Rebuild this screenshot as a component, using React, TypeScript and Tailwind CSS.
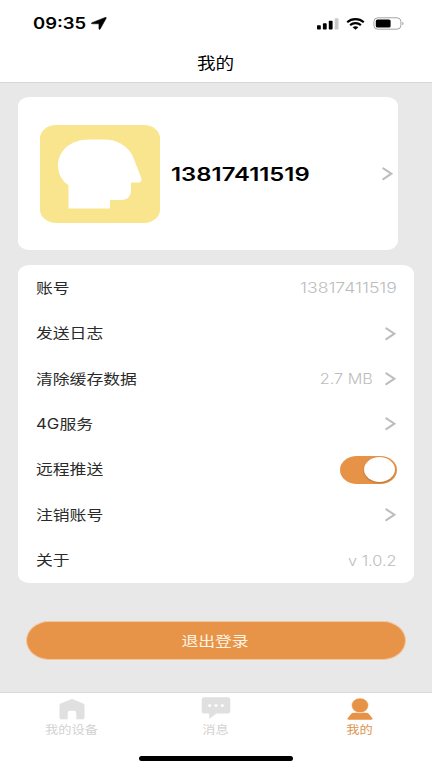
import React, { useState } from "react";

const cjk = "font-['Inter','Noto_Sans_CJK_SC',sans-serif]";

function Chevron({ className = "" }: { className?: string }) {
  return (
    <svg width="12" height="14" viewBox="0 0 12 14" fill="none" className={`shrink-0 ${className}`}>
      <path d="M1.3 1.3 9.4 6.7 1.3 12.1" stroke="#bdbdbd" strokeWidth="2" strokeLinecap="round" strokeLinejoin="miter" />
    </svg>
  );
}

function StatusBar() {
  return (
    <div className="flex h-[47px] items-center justify-between pr-[27px] pl-[33px]">
      <div className="flex items-center">
        <span className="w-[57px] origin-left scale-x-[1.19] pt-px text-[15.5px] leading-none font-semibold">09:35</span>
        <svg width="16" height="13" viewBox="0 0 16 13" className="ml-px">
          <path d="M14.2.4C15 .1 15.6.6 15.2 1.2L9.2 12.1c-.4.7-1.3.5-1.3-.3V7.2c0-.3-.1-.4-.5-.4H1.3C.3 6.8.1 6 .9 5.7Z" fill="#000" stroke="#000" strokeWidth=".5" />
        </svg>
      </div>
      <div className="flex items-center">
        <svg width="22" height="12" viewBox="0 0 22 12">
          <rect x="0" y="7.3" width="3.8" height="4.2" rx=".8" />
          <rect x="5.9" y="5.3" width="3.8" height="6.2" rx=".8" />
          <rect x="11.8" y="2.8" width="3.8" height="8.7" rx=".8" />
          <rect x="17.7" y=".3" width="3.8" height="11.2" rx=".8" fill="#c9c9c9" />
        </svg>
        <svg width="19" height="12" viewBox="0 0 19 12" className="ml-[7px]">
          <path d="M1.2 4.2C5.7.1 13.3.1 17.8 4.2M4.1 7.1c3-2.6 7.8-2.6 10.8 0" fill="none" stroke="#000" strokeWidth="2.1" />
          <path d="M6.6 9.3c1.7-1.4 4.1-1.4 5.8 0L9.5 11.8Z" />
        </svg>
        <svg width="32" height="13" viewBox="0 0 32 13" className="ml-[8px]">
          <rect x=".9" y=".8" width="27" height="11.4" rx="3.8" fill="#fff" stroke="#a3a3a3" strokeWidth="1" />
          <rect x="2.8" y="2.4" width="14.8" height="8.2" rx="1.7" />
          <path d="M29.3 4.8c1.7.6 1.7 2.8 0 3.4Z" fill="#a3a3a3" />
        </svg>
      </div>
    </div>
  );
}

function Avatar() {
  return (
    <svg width="120" height="98" viewBox="0 0 120 98" className="shrink-0">
      <rect width="120" height="98" rx="16" ry="13.5" fill="#f9e58d" />
      <path d="M28.5 83.5V60.2C22 56 18 49 18 40.8C18 25.5 31 14.6 49 14.6H64C77 14.6 87 20.5 92.5 30.5L101.3 53C102 55.5 101 57.6 98.5 57.6H91V66C91 71 87 75 82 75H70V83.5Z" fill="#fff" />
    </svg>
  );
}

function Row({ label, children }: { label: string; children?: React.ReactNode }) {
  return (
    <div className="flex flex-1 items-center justify-between pr-[17px] pl-[17.5px]">
      <span className="origin-left scale-x-[1.2] text-[14px] leading-none whitespace-nowrap text-[#2a2a2a]">{label}</span>
      <div className="flex items-center pt-px">{children}</div>
    </div>
  );
}

function Value({ children, className = "" }: { children: React.ReactNode; className?: string }) {
  return (
    <span className={`origin-right text-[14px] leading-none font-light whitespace-nowrap text-[#bcbcbc] ${className}`}>
      {children}
    </span>
  );
}

function Tab({ label, active, children }: { label: string; active?: boolean; children: React.ReactNode }) {
  return (
    <div className={`flex flex-1 flex-col items-center ${active ? "text-[#e69347]" : "text-[#e0e0e0]"}`}>
      <div className="flex h-[24px] items-end">{children}</div>
      <span className={`mt-[5px] -translate-x-[0.5px] scale-x-[1.2] text-[11px] leading-none ${active ? "text-[#dc9650]" : "text-[#d2d2d2]"}`}>{label}</span>
    </div>
  );
}

export default function App() {
  const [push, setPush] = useState(true);
  return (
    <div className={`flex h-[768px] w-[432px] flex-col overflow-hidden bg-[#e8e8e8] ${cjk}`}>
      <header className="h-[83px] shrink-0 border-b border-[#d6d6d6] bg-white text-black">
        <StatusBar />
        <h1 className="flex h-[33px] items-center justify-center text-[15.5px] leading-none">
          <span className="scale-x-[1.2]">我的</span>
        </h1>
      </header>

      <main className="flex flex-1 flex-col">
        <section className="mt-[14px] ml-[18px] flex h-[153px] w-[380px] items-center rounded-[11px/9px] bg-white pr-[4px] pl-[22px]">
          <Avatar />
          <span className="ml-[11px] origin-left scale-x-[1.29] pt-px text-[18.5px] leading-none font-semibold text-black">13817411519</span>
          <Chevron className="ml-auto" />
        </section>

        <section className="mt-[15px] ml-[18px] flex h-[318px] w-[396px] flex-col rounded-[11px/9px] bg-white">
          <Row label="账号"><Value className="scale-x-[1.26]">13817411519</Value></Row>
          <Row label="发送日志"><Chevron /></Row>
          <Row label="清除缓存数据"><Value className="mr-[12px] scale-x-[1.16]">2.7 MB</Value><Chevron /></Row>
          <Row label="4G服务"><Chevron /></Row>
          <Row label="远程推送">
            <button
              aria-label="远程推送"
              onClick={() => setPush(!push)}
              className={`flex h-[28px] w-[57px] items-center rounded-[17px/14px] px-[2px] ${push ? "justify-end bg-[#e69347]" : "justify-start bg-[#e0e0e0]"}`}
            >
              <span className="h-[25px] w-[31px] rounded-[50%] bg-white shadow-[0_1px_2px_rgba(120,60,0,0.4)]" />
            </button>
          </Row>
          <Row label="注销账号"><Chevron /></Row>
          <Row label="关于"><Value className="scale-x-[1.17]">v 1.0.2</Value></Row>
        </section>

        <button className="mt-[38px] ml-[26px] flex h-[39px] w-[380px] items-center justify-center rounded-[23px/19.5px] border border-[#efc8a2] bg-[#e79448] text-[14px] leading-none text-[#fff3e4]">
          <span className="-translate-x-px scale-x-[1.2]">退出登录</span>
        </button>
      </main>

      <footer className="flex h-[76px] shrink-0 flex-col items-center border-t border-[#dadada] bg-white">
        <nav className="flex h-[63px] w-full pt-[3px]">
          <Tab label="我的设备">
            <svg width="26" height="21" viewBox="0 0 26 21" fill="currentColor">
              <path d="M11.6.4Q13-.2 14.4.4L24.3 4.5Q25.5 5 25.5 6.2V18.8Q25.5 20.3 24 20.3H17.3V14Q17.3 11.8 15 11.8H11Q8.7 11.8 8.7 14V20.3H2Q.5 20.3.5 18.8V6.2Q.5 5 1.7 4.5Z" />
            </svg>
          </Tab>
          <Tab label="消息">
            <svg width="30" height="22" viewBox="0 0 30 22" fill="currentColor" className="mb-px">
              <path d="M2.5.3H27Q29.3.3 29.3 2.3V14.5Q29.3 16.5 27 16.5H15.5L9.3 21.3Q8.2 22 8.2 20.5V16.5H3Q.7 16.5.7 14.5V2.3Q.7.3 3 .3Z" />
              <g fill="#fff"><ellipse cx="8.7" cy="8.6" rx="1.6" ry="1.4" /><ellipse cx="15" cy="8.6" rx="1.6" ry="1.4" /><ellipse cx="21.3" cy="8.6" rx="1.6" ry="1.4" /></g>
            </svg>
          </Tab>
          <Tab label="我的" active>
            <svg width="26" height="22" viewBox="0 0 26 22" fill="currentColor">
              <path d="M.7 20.3 4 16Q5.1 14.7 7 14.7H19Q20.9 14.7 22 16L25.3 20.3Q25.8 21.8 24 21.8H2Q.2 21.8.7 20.3Z" />
              <ellipse cx="13" cy="7.4" rx="8.5" ry="7.4" stroke="#fff" strokeWidth=".6" />
            </svg>
          </Tab>
        </nav>
        <div className="h-[5px] w-[154px] rounded-full bg-black" />
      </footer>
    </div>
  );
}
